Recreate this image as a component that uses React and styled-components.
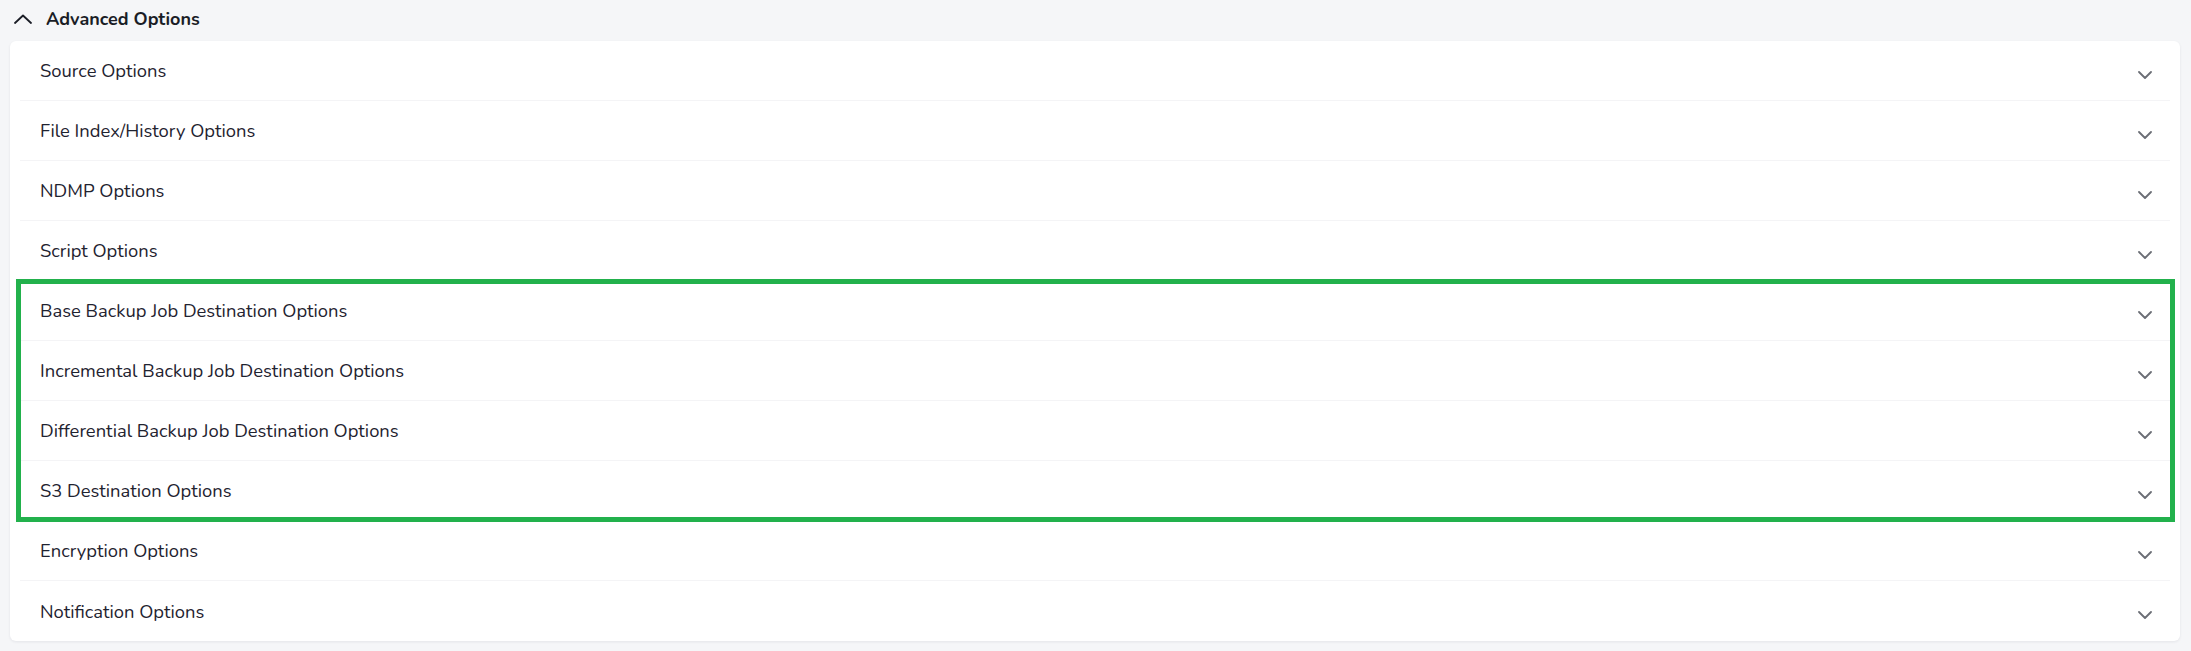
import React from 'react'
import styled, { createGlobalStyle } from 'styled-components'

const Global = createGlobalStyle`
    body {
        margin: 0;
        background: #f5f6f8;
        font-family: Nunito, Lato, "Noto Sans", sans-serif;
        color: #1f2330;
    }
`

const Page = styled.div`
    padding: 0 11px 10px 10px;
`

const Header = styled.div`
    display: flex;
    align-items: center;
    gap: 14px;
    height: 41px;
    padding: 0 0 4px 4px;
    box-sizing: border-box;
    font-size: 18px;
    font-weight: 700;
    color: #1a1d26;
`

const Card = styled.div`
    background: #fff;
    border-radius: 6px;
    box-shadow: 0 1px 3px rgba(20, 30, 50, 0.08);
    padding: 0 10px;
`

// green annotation frame drawn over a group of rows
const Group = styled.div`
    position: relative;

    &::after{
        content: '';
        position: absolute;
        top: -2px;
        bottom: -1px;
        left: -4px;
        right: -5px;
        border: 5px solid #22b14c;
        pointer-events: none;
    }
`

const Row = styled.div`
    display: flex;
    align-items: center;
    justify-content: space-between;
    box-sizing: border-box;
    height: 60px;
    padding: 0 18px 0 20px;
    border-bottom: ${props => props.last ? 'none' : '1px solid #f4f4f6'};
    font-size: 18.4px;
    cursor: pointer;

    svg{
        margin-top: 8px;
    }
`

const Chevron = ({ up }) => (
    <svg width={up ? 18 : 14} height={up ? 10 : 8} viewBox={up ? '0 0 18 10' : '0 0 14 8'} fill="none"
        stroke={up ? '#1a1d26' : '#6b6e75'} strokeWidth="1.8" strokeLinecap="round" strokeLinejoin="round">
        {up ? <path d="M1 9 L9 1.5 L17 9" /> : <path d="M1 1 L7 7 L13 1" />}
    </svg>
)

const top = ['Source Options', 'File Index/History Options', 'NDMP Options', 'Script Options']
const marked = [
    'Base Backup Job Destination Options',
    'Incremental Backup Job Destination Options',
    'Differential Backup Job Destination Options',
    'S3 Destination Options',
]
const bottom = ['Encryption Options', 'Notification Options']

const Item = ({ label, last }) => (
    <Row last={last}>
        <span>{label}</span>
        <Chevron />
    </Row>
)

const App = () => {
    return (
        <Page>
            <Global />
            <Header>
                <Chevron up />
                Advanced Options
            </Header>
            <Card>
                {top.map(l => <Item key={l} label={l} />)}
                <Group>
                    {marked.map(l => <Item key={l} label={l} />)}
                </Group>
                {bottom.map((l, i) => <Item key={l} label={l} last={i === bottom.length - 1} />)}
            </Card>
        </Page>
    )
}

export default App
